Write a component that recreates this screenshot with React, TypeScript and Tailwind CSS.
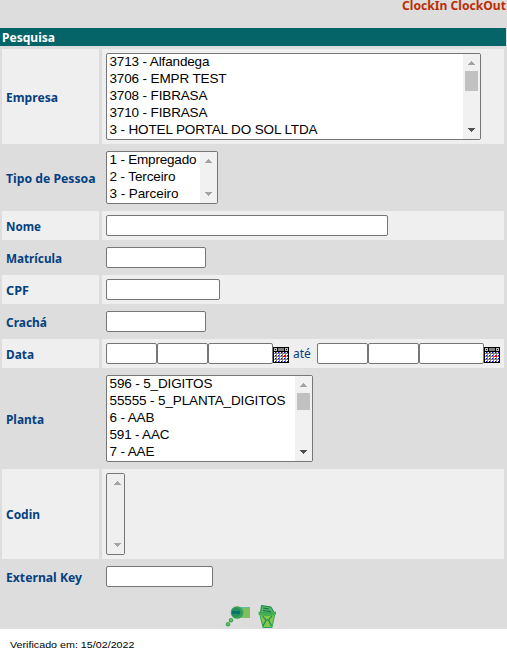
import React from "react";

const labelFont = "font-['Noto_Sans',sans-serif] text-[13px] font-bold";

function Arrow({ down, active }: { down?: boolean; active?: boolean }) {
  return (
    <svg width="7" height="4" viewBox="0 0 7 4" shapeRendering="crispEdges" className={active ? "text-[#505050]" : "text-[#a3a3a3]"} fill="currentColor">
      {down ? <path d="M0 0h7v1H0zM1 1h5v1H1zM2 2h3v1H2zM3 3h1v1H3z" /> : <path d="M3 0h1v1H3zM2 1h3v1H2zM1 2h5v1H1zM0 3h7v1H0z" />}
    </svg>
  );
}

function ListBox({ items, size, thumb, clear }: { items: { t: string; w: number }[]; size: string; thumb?: string; clear?: boolean }) {
  return (
    <div className={`flex shrink-0 overflow-hidden rounded-[2px] border border-[#767676] ${clear ? "bg-[#efefef]" : "bg-white"} ${size}`}>
      <div className="min-w-0 flex-1 pl-[2px] font-['Liberation_Sans',Arial,sans-serif] text-[13.5px] leading-[17px] text-black">
        {items.map((i) => (
          <svg key={i.t} className="block h-[17px] overflow-visible" width={i.w} height="17">
            <text x="0.5" y="12" textLength={i.w} lengthAdjust="spacing" fill="currentColor">{i.t}</text>
          </svg>
        ))}
      </div>
      <div className={`flex w-[17px] shrink-0 flex-col items-center justify-between pt-[7px] pb-[7px] ${clear ? "bg-[#efefef]" : "bg-[#f1f1f1]"}`}>
        <div className="flex flex-col items-center gap-[6px]">
          <Arrow />
          {thumb && <div className={`w-[13px] bg-[#c1c1c1] ${thumb}`} />}
        </div>
        <Arrow down active={!!thumb} />
      </div>
    </div>
  );
}

function Field({ size }: { size: string }) {
  return <input className={`h-[21px] shrink-0 rounded-[2px] border border-[#767676] bg-white ${size}`} />;
}

function Calendar() {
  const steps = [0, 1, 2, 3, 4];
  return (
    <svg width="16" height="16" viewBox="0 0 16 16" shapeRendering="crispEdges" className="relative top-px shrink-0">
      <rect width="16" height="16" fill="#000" />
      <rect x="1" y="1" width="3" height="3" fill="#c0c0c0" />
      <rect x="12" y="1" width="3" height="3" fill="#c0c0c0" />
      <rect x="2" y="2" width="1" height="1" fill="#000" />
      <rect x="13" y="2" width="1" height="1" fill="#000" />
      <rect x="5" y="1" width="6" height="3" fill="#808080" />
      <rect x="1" y="5" width="14" height="10" fill="#808080" />
      {[0, 1, 2, 3].map((r) =>
        steps.map((c) => (
          <g key={`${r}-${c}`}>
            <rect x={1 + c * 3} y={r === 0 ? 5 : 4 + r * 3} width="2" height={r === 0 ? 1 : 2} fill="#fff" />
            <rect x={2 + c * 3} y={5 + r * 3} width="1" height="1" fill="#0000ff" />
          </g>
        )),
      )}
      <path d="M11 8h2v2h-3V9h1z" fill="#ff0000" />
    </svg>
  );
}

function Row({ label, width, h, shade, children }: { label: string; width: number; h: string; shade?: boolean; children: React.ReactNode }) {
  const bg = shade ? "bg-[#efefef]" : "";
  return (
    <div className={`flex gap-[3px] ${h}`}>
      <div className={`flex w-[97px] shrink-0 items-center pl-1 text-[#054080] ${labelFont} ${bg}`}>
        <svg className="block overflow-visible" width={width} height="18">
          <text x="0" y="14" textLength={width} lengthAdjust="spacingAndGlyphs" fill="currentColor">{label}</text>
        </svg>
      </div>
      <div className={`flex w-[402px] pt-1 pl-1 ${bg}`}>{children}</div>
    </div>
  );
}

const empresas = [
  { t: "3713 - Alfandega", w: 100 },
  { t: "3706 - EMPR TEST", w: 117 },
  { t: "3708 - FIBRASA", w: 98 },
  { t: "3710 - FIBRASA", w: 98 },
  { t: "3 - HOTEL PORTAL DO SOL LTDA", w: 208 },
];
const tipos = [
  { t: "1 - Empregado", w: 87 },
  { t: "2 - Terceiro", w: 66 },
  { t: "3 - Parceiro", w: 69 },
];
const plantas = [
  { t: "596 - 5_DIGITOS", w: 103 },
  { t: "55555 - 5_PLANTA_DIGITOS", w: 176 },
  { t: "6 - AAB", w: 45 },
  { t: "591 - AAC", w: 60 },
  { t: "7 - AAE", w: 45 },
];

export default function App() {
  return (
    <div className="h-[659px] w-[507px] overflow-hidden bg-white">
      <div className="h-[629px] overflow-hidden bg-[#dddddd]">
        <div className={`flex h-[28px] justify-end pr-px text-[#bf2c04] ${labelFont}`}>
          <svg className="block overflow-visible" width="104" height="18">
            <text x="0" y="10" textLength="104" lengthAdjust="spacingAndGlyphs" fill="currentColor">ClockIn ClockOut</text>
          </svg>
        </div>
        <div className={`flex h-[18px] w-[506px] bg-[#056467] pl-[2px] text-white ${labelFont}`}>
          <svg className="block overflow-visible" width="53" height="18">
            <text x="0" y="14" textLength="53" lengthAdjust="spacingAndGlyphs" fill="currentColor">Pesquisa</text>
          </svg>
        </div>
        <div className="flex flex-col gap-[3px] pt-[3px] pl-[2px]">
          <Row label="Empresa" width={52} h="h-[95px]" shade>
            <ListBox items={empresas} size="h-[87px] w-[375px]" thumb="h-[20px]" />
          </Row>
          <Row label="Tipo de Pessoa" width={89.5} h="h-[61px]">
            <ListBox items={tipos} size="h-[53px] w-[112px]" />
          </Row>
          <Row label="Nome" width={35} h="h-[29px]" shade><Field size="w-[282px]" /></Row>
          <Row label="Matrícula" width={56} h="h-[29px]"><Field size="w-[100px]" /></Row>
          <Row label="CPF" width={23} h="h-[29px]" shade><Field size="w-[114px]" /></Row>
          <Row label="Crachá" width={41} h="h-[29px]"><Field size="w-[100px]" /></Row>
          <Row label="Data" width={28} h="h-[29px]" shade>
            <div className="flex h-[21px] items-center">
              <Field size="w-[51px]" /><Field size="w-[51px]" /><Field size="w-[65px]" />
              <Calendar />
              <span className="w-[28px] shrink-0 pl-1 font-['Noto_Sans',sans-serif] text-[12px] leading-[21px] text-[#054080]">até</span>
              <Field size="w-[51px]" /><Field size="w-[51px]" /><Field size="w-[65px]" />
              <Calendar />
            </div>
          </Row>
          <Row label="Planta" width={38} h="h-[95px]">
            <ListBox items={plantas} size="h-[87px] w-[207px]" thumb="h-[17px]" />
          </Row>
          <Row label="Codin" width={34} h="h-[90px]" shade>
            <ListBox items={[]} size="h-[82px] w-[19px]" clear />
          </Row>
          <Row label="External Key" width={76} h="h-[29px]"><Field size="w-[107px]" /></Row>
        </div>
        <div className="flex gap-[7px] pt-[13px] pl-[225px]">
          <svg width="26" height="24" viewBox="0 0 26 24">
            <rect x="10" y="3" width="15" height="11" fill="#80bf5c" />
            <path d="M10 3h15v1H10zM17 4h2v9h-2z" fill="#62bda0" />
            <circle cx="12" cy="8.5" r="6.3" fill="#3ba052" />
            <ellipse cx="11" cy="8.5" rx="4.7" ry="4.5" fill="#23905e" />
            <path d="M7 7h8v3H7z" fill="#08756c" />
            <circle cx="6" cy="16.2" r="2.2" fill="#39a35a" /><circle cx="6" cy="16" r="1" fill="#79c655" />
            <circle cx="3" cy="20.2" r="2.2" fill="#39a35a" /><circle cx="3" cy="20" r="1" fill="#79c655" />
          </svg>
          <svg width="20" height="25" viewBox="0 0 20 25">
            <path d="M2.5 9 3.5 1.5 13 3l3.5 6z" fill="#5bb759" stroke="#168551" />
            <path d="M5 4l6 1M5 6.5l8 1" stroke="#087059" />
            <path d="M1.5 9h15.5l-3 14.5h-9z" fill="#7fc84d" stroke="#37a555" />
            <path d="M.5 7.5q8.500 3.500 17.500 0v3q-8.500 3-17.500 0z" fill="#45ad52" />
            <path d="m5 22 3-6h2.500l3 6M4.500 12l3.500 4M14 12l-3.500 4" stroke="#16834e" strokeWidth="1.1" fill="none" />
            <path d="M5 23h9v1H5z" fill="#26a173" />
          </svg>
        </div>
      </div>
      <div className="pt-[9px] pl-[10px] font-['Liberation_Sans',Arial,sans-serif] text-[9.5px] text-black">
        <svg className="block overflow-visible" width="125" height="14">
          <text x="0" y="10" textLength="124.5" lengthAdjust="spacingAndGlyphs" fill="currentColor">Verificado em: 15/02/2022</text>
        </svg>
      </div>
    </div>
  );
}
